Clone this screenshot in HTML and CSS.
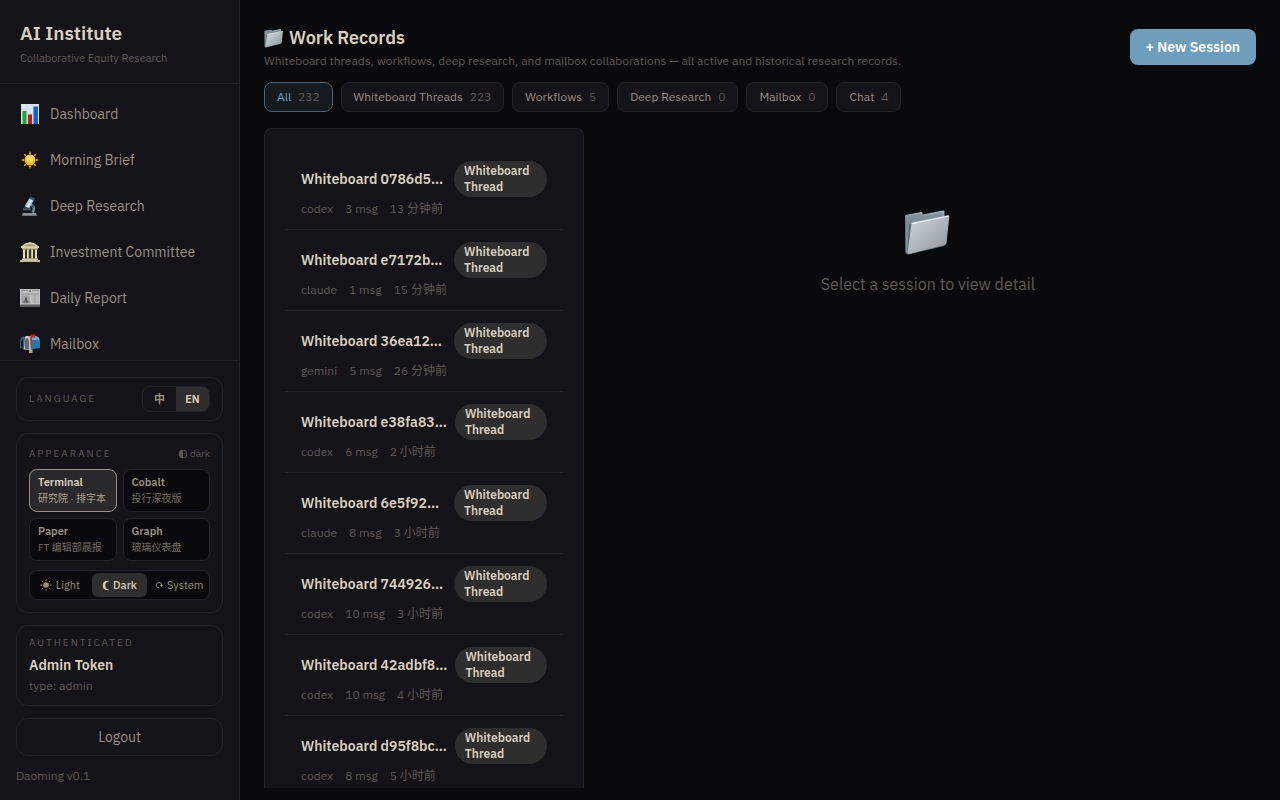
FILE: index.html
```html
<!DOCTYPE html>
<html lang="en">
<head>
    <meta charset="UTF-8">
    <meta name="viewport" content="width=device-width, initial-scale=1.0">
    <title>AI Institute - Work Records</title>
    <link rel="stylesheet" href="styles.css">
</head>
<body>
    <!-- shared folder icon -->
    <svg class="sprite" aria-hidden="true">
        <defs>
            <linearGradient id="folderFront" x1="0" y1="0" x2="1" y2="1">
                <stop offset="0" stop-color="#d3d9df"/>
                <stop offset="0.5" stop-color="#b0b6be"/>
                <stop offset="1" stop-color="#8d939b"/>
            </linearGradient>
            <linearGradient id="folderBack" x1="0" y1="0" x2="0" y2="1">
                <stop offset="0" stop-color="#a5b2bd"/>
                <stop offset="0.3" stop-color="#60717f"/>
                <stop offset="1" stop-color="#52616e"/>
            </linearGradient>
            <symbol id="folder" viewBox="0 0 48 48">
                <path d="M1 8.500Q1 7 2.500 6.800L17 4q1.500-.2 1.500 1v1.500L39 2.600q1.500-.2 1.500 1.200V38L4 46.500q-3-.5-3-3z" fill="url(#folderBack)"/>
                <path d="M2 9v35l1.500 1.500L5 16l33-7V5L18 9l-1-3z" fill="#7e8e9b"/>
                <path d="M7.500 16.200q0-1.500 1.500-1.900L43.500 7.200q2-.4 1.800 1.500L42.500 35q-.2 1.700-1.900 2.100L5 46q-1.700.3-1.500-1.500z" fill="url(#folderFront)"/>
                <path d="M7.600 15.800L44.800 8" stroke="#eef2f5" stroke-width="1" fill="none"/>
            </symbol>
        </defs>
    </svg>

    <div class="app">
        <aside class="sidebar">
            <div class="brand">
                <div class="brand-name">AI Institute</div>
                <div class="brand-sub">Collaborative Equity Research</div>
            </div>

            <nav class="nav">
                <a href="#" class="nav-item">
                    <svg class="nav-icon" viewBox="0 0 20 20">
                        <rect x="1" width="18" height="20" fill="#dce6f0"/>
                        <path d="M1 5h18M1 10h18M1 15h18M7 0v20M13 0v20" stroke="#bccbdd" stroke-width="0.500"/>
                        <rect x="2.500" y="7" width="4" height="13" fill="#0eb32a"/>
                        <rect x="8" y="10.500" width="4" height="9.500" fill="#c4141b"/>
                        <rect x="13.500" y="2.500" width="4.500" height="17.500" fill="#1260cc"/>
                    </svg>
                    Dashboard
                </a>
                <a href="#" class="nav-item">
                    <svg class="nav-icon" viewBox="0 0 20 20">
                        <path d="M10 1l1.200 3H8.800zM10 19l1.200-3H8.800zM1 10l3-1.200v2.400zM19 10l-3-1.200v2.400zM3.600 3.600l3 1.300-1.700 1.700zM16.400 3.600l-1.300 3-1.700-1.700zM3.600 16.400l1.300-3 1.700 1.700zM16.400 16.400l-3-1.300 1.700-1.700z" fill="#f4ad16"/>
                        <circle cx="10" cy="10" r="5.500" fill="#f7b81c"/>
                        <circle cx="10" cy="8.500" r="3.800" fill="#fdda55"/>
                    </svg>
                    Morning Brief
                </a>
                <a href="#" class="nav-item">
                    <svg class="nav-icon" viewBox="0 0 20 20">
                        <path d="M11 8.500q5 2.500 1.500 8" stroke="#6f8ca0" stroke-width="2.500" fill="none"/>
                        <path d="M3 17h13l1 2.800H2z" fill="#8298a7"/>
                        <path d="M3 12.500h8v1.700H3z" fill="#52697a"/>
                        <path d="M9.500 2l4.200 2.200-4.500 8.300-4.500-2.200z" fill="#a9c8de"/>
                        <path d="M10.500 3.500l1.500.8-4 7.200-1.500-.7z" fill="#dbeaf4"/>
                        <path d="M10.500.5l4.500 2-1 2-4.500-2z" fill="#3e5261"/>
                        <path d="M4.500 10.300l4 2-.8 1.600-3.700-1.800z" fill="#3b4e5c"/>
                        <circle cx="13" cy="10.500" r="1.800" fill="#405666"/>
                    </svg>
                    Deep Research
                </a>
                <a href="#" class="nav-item">
                    <svg class="nav-icon" viewBox="0 0 20 20">
                        <rect x="3" y="7" width="14" height="10" fill="#39331f"/>
                        <path d="M10 0Q15 .8 19 4.500V6H1V4.500Q5 .8 10 0z" fill="#d8cfaa"/>
                        <path d="M10 2Q14 2.500 16 4.200H4Q6 2.500 10 2z" fill="#a69c78"/>
                        <path d="M2 6h16v1.500H2z" fill="#b9af8b"/>
                        <path d="M3 7.500h2v9H3zM7 7.500h1.800v9H7zM11.200 7.500H13v9h-1.800zM15 7.500h2v9h-2z" fill="#e3dbba"/>
                        <path d="M2 16.500h16V18H2z" fill="#d6cda9"/>
                        <path d="M0 18h20v2H0z" fill="#c5bb94"/>
                    </svg>
                    Investment Committee
                </a>
                <a href="#" class="nav-item">
                    <svg class="nav-icon" viewBox="0 0 20 20">
                        <rect y="1" width="20" height="18" fill="#c0c0c0"/>
                        <path d="M0 16.500h20V19H0z" fill="#5c5c5c"/>
                        <path d="M1 2.500h7M12 2.500h7M1 6h18" stroke="#818181" stroke-width="0.800"/>
                        <path d="M8.500 3.500l1.500-1.500 1.500 1.500z" fill="#4d4d4d"/>
                        <rect x="1.500" y="7.500" width="8.500" height="8" fill="#a2a2a2"/>
                        <path d="M3 14.500q1-2 2-2V11q0-2 1-2t1 2v1.500q1.500 0 2 2z" fill="#575757"/>
                        <path d="M11.500 8h7M11.500 10h7M11.500 12h7M11.500 14h7M15 7v9" stroke="#a0a0a0" stroke-width="0.600"/>
                    </svg>
                    Daily Report
                </a>
                <a href="#" class="nav-item">
                    <svg class="nav-icon" viewBox="0 0 20 20">
                        <path d="M9 15h3.500v4H9z" fill="#c7a36c"/>
                        <path d="M5 2h10.500Q20 2.500 20 7.500V14L8 16z" fill="#2878a6"/>
                        <path d="M7 2h8.500Q19 2.500 19.500 6L9 6z" fill="#66aad0"/>
                        <path d="M3.500 15.500V7Q4 2 7 2t3.500 5v9z" fill="#c4c9ce"/>
                        <path d="M5 15V8q0-4 2-4t2 4v7.500z" fill="#5f6971"/>
                        <path d="M0 14V7.500Q.5 3 3.500 2.500L5 3.500 4 15z" fill="#38617d"/>
                        <path d="M1 13V8q.5-3 2-3v9z" fill="#171f28"/>
                        <path d="M10.500.5H15v3h-3v8h-1.500z" fill="#e01f14"/>
                    </svg>
                    Mailbox
                </a>
            </nav>

            <div class="sidebar-footer">
                <div class="card language">
                    <span class="card-label">LANGUAGE</span>
                    <div class="lang-switch">
                        <button type="button">中</button>
                        <button type="button" class="active">EN</button>
                    </div>
                </div>

                <div class="card">
                    <div class="card-head">
                        <span class="card-label">APPEARANCE</span>
                        <span class="mode-note">
                            <svg class="mode-icon" viewBox="0 0 10 10"><circle cx="5" cy="5" r="4" fill="none" stroke="currentColor" stroke-width="0.800"/><path d="M5 1a4 4 0 0 0 0 8z" fill="currentColor"/></svg>
                            dark
                        </span>
                    </div>
                    <div class="theme-grid">
                        <button type="button" class="theme active"><strong>Terminal</strong><span>研究院 · 排字本</span></button>
                        <button type="button" class="theme"><strong>Cobalt</strong><span>投行深夜版</span></button>
                        <button type="button" class="theme"><strong>Paper</strong><span>FT 编辑部晨报</span></button>
                        <button type="button" class="theme"><strong>Graph</strong><span>玻璃仪表盘</span></button>
                    </div>
                    <div class="mode-switch">
                        <button type="button">
                            <svg class="mode-sun" viewBox="0 0 12 12"><circle cx="6" cy="6" r="2.800" fill="currentColor"/><path d="M6 0v2M6 10v2M0 6h2M10 6h2M1.800 1.800l1.400 1.400M8.800 8.800l1.400 1.400M10.200 1.800L8.800 3.200M3.200 8.800l-1.400 1.400" stroke="currentColor" stroke-width="0.800"/></svg>
                            Light
                        </button>
                        <button type="button" class="active">
                            <svg class="mode-moon" viewBox="0 0 7 11"><path d="M6.500 1.200Q3 1.800 3 5.500T6.500 9.800Q1 10.500 1 5.500T6.500 1.200z" fill="currentColor" stroke="currentColor" stroke-width="0.500"/></svg>
                            Dark
                        </button>
                        <button type="button">
                            <svg class="mode-sync" viewBox="0 0 8 8"><path d="M4.500 6.800A2.700 2.700 0 1 1 6.700 4.500" fill="none" stroke="currentColor" stroke-width="0.900"/><path d="M4.800 4h3.200L6.500 6z" fill="currentColor"/></svg>
                            System
                        </button>
                    </div>
                </div>

                <div class="card account">
                    <div class="card-label">AUTHENTICATED</div>
                    <div class="account-name">Admin Token</div>
                    <div class="account-type">type: admin</div>
                </div>

                <button type="button" class="logout">Logout</button>
                <div class="version">Daoming v0.1</div>
            </div>
        </aside>

        <main class="main">
            <header class="page-head">
                <div>
                    <h1><svg class="title-icon"><use href="#folder"/></svg>Work Records</h1>
                    <p>Whiteboard threads, workflows, deep research, and mailbox collaborations — all active and historical research records.</p>
                </div>
                <button type="button" class="new-session">+ New Session</button>
            </header>

            <div class="filters">
                <button type="button" class="filter active">All <span>232</span></button>
                <button type="button" class="filter">Whiteboard Threads <span>223</span></button>
                <button type="button" class="filter">Workflows <span>5</span></button>
                <button type="button" class="filter">Deep Research <span>0</span></button>
                <button type="button" class="filter">Mailbox <span>0</span></button>
                <button type="button" class="filter">Chat <span>4</span></button>
            </div>

            <div class="content">
                <section class="session-list">
                    <article class="session">
                        <div class="session-top"><h2>Whiteboard 0786d5…</h2><span class="badge">Whiteboard Thread</span></div>
                        <div class="session-meta"><span>codex</span><span>3 msg</span><span>13 分钟前</span></div>
                    </article>
                    <article class="session">
                        <div class="session-top"><h2>Whiteboard e7172b…</h2><span class="badge">Whiteboard Thread</span></div>
                        <div class="session-meta"><span>claude</span><span>1 msg</span><span>15 分钟前</span></div>
                    </article>
                    <article class="session">
                        <div class="session-top"><h2>Whiteboard 36ea12…</h2><span class="badge">Whiteboard Thread</span></div>
                        <div class="session-meta"><span>gemini</span><span>5 msg</span><span>26 分钟前</span></div>
                    </article>
                    <article class="session">
                        <div class="session-top"><h2>Whiteboard e38fa83…</h2><span class="badge">Whiteboard Thread</span></div>
                        <div class="session-meta"><span>codex</span><span>6 msg</span><span>2 小时前</span></div>
                    </article>
                    <article class="session">
                        <div class="session-top"><h2>Whiteboard 6e5f92…</h2><span class="badge">Whiteboard Thread</span></div>
                        <div class="session-meta"><span>claude</span><span>8 msg</span><span>3 小时前</span></div>
                    </article>
                    <article class="session">
                        <div class="session-top"><h2>Whiteboard 744926…</h2><span class="badge">Whiteboard Thread</span></div>
                        <div class="session-meta"><span>codex</span><span>10 msg</span><span>3 小时前</span></div>
                    </article>
                    <article class="session">
                        <div class="session-top"><h2>Whiteboard 42adbf8…</h2><span class="badge">Whiteboard Thread</span></div>
                        <div class="session-meta"><span>codex</span><span>10 msg</span><span>4 小时前</span></div>
                    </article>
                    <article class="session">
                        <div class="session-top"><h2>Whiteboard d95f8bc…</h2><span class="badge">Whiteboard Thread</span></div>
                        <div class="session-meta"><span>codex</span><span>8 msg</span><span>5 小时前</span></div>
                    </article>
                </section>

                <section class="detail-empty">
                    <svg class="empty-icon"><use href="#folder"/></svg>
                    <p>Select a session to view detail</p>
                </section>
            </div>
        </main>
    </div>
</body>
</html>
```
FILE: styles.css
```css
:root {
    --bg: #0a0a0c;
    --panel: #141318;
    --line: #24232b;
    --text: #d9cfbf;
    --text-mid: #989082;
    --text-dim: #5e5a52;
    --active: #2e2e2e;
    --accent: #6f9dbc;
}
* {
    box-sizing: border-box;
}
body {
    margin: 0;
    background: var(--bg);
    color: var(--text);
    font-family: "IBM Plex Sans", Roboto, "Noto Sans CJK SC", sans-serif;
    font-size: 14px;
    line-height: 20px;
}
button {
    font: inherit;
    color: inherit;
    background: none;
    border: none;
    padding: 0;
    cursor: pointer;
}
h1, h2, p {
    margin: 0;
}
svg {
    flex-shrink: 0;
}
.sprite {
    display: block;
    width: 0;
    height: 0;
}
.app {
    display: flex;
    height: 100vh;
    overflow: hidden;
}

/* sidebar */
.sidebar {
    width: 240px;
    flex-shrink: 0;
    display: flex;
    flex-direction: column;
    background: var(--panel);
    border-right: 1px solid var(--line);
}
.brand {
    padding: 20px 20px 16px;
    border-bottom: 1px solid var(--line);
}
.brand-name {
    font-size: 19px;
    font-weight: 600;
    line-height: 27px;
}
.brand-sub {
    margin-top: 2px;
    font-size: 11px;
    line-height: 18px;
    color: var(--text-dim);
}
.nav {
    flex: 1;
    min-height: 0;
    overflow: hidden;
    padding: 7px 0;
}
.nav-item {
    display: flex;
    align-items: center;
    gap: 10px;
    height: 46px;
    padding: 0 20px;
    color: var(--text-mid);
    font-size: 14px;
    text-decoration: none;
}
.nav-icon {
    width: 20px;
    height: 20px;
}
.sidebar-footer {
    display: flex;
    flex-direction: column;
    gap: 12px;
    padding: 16px;
    border-top: 1px solid var(--line);
}
.card {
    padding: 12px;
    border: 1px solid var(--line);
    border-radius: 12px;
}
.card-label {
    font-size: 10px;
    line-height: 14px;
    letter-spacing: 2px;
    color: var(--text-dim);
}
.language {
    display: flex;
    align-items: center;
    justify-content: space-between;
    padding: 8px 12px;
}
.lang-switch {
    display: flex;
    border: 1px solid var(--line);
    border-radius: 8px;
    overflow: hidden;
}
.lang-switch button {
    width: 33px;
    height: 24px;
    font-size: 11px;
    font-weight: 600;
    line-height: 24px;
    color: var(--text-mid);
}
.lang-switch .active {
    background: var(--active);
    color: var(--text);
}
.card-head {
    display: flex;
    align-items: center;
    justify-content: space-between;
    margin-bottom: 8px;
    line-height: 15px;
}
.mode-note {
    display: flex;
    align-items: center;
    gap: 2px;
    font-size: 10px;
    color: var(--text-dim);
}
.mode-icon {
    width: 10px;
    height: 10px;
}
.theme-grid {
    display: grid;
    grid-template-columns: 1fr 1fr;
    gap: 6px;
}
.theme {
    display: flex;
    flex-direction: column;
    padding: 4px 8px;
    border: 1px solid var(--line);
    border-radius: 8px;
    background: var(--bg);
    color: var(--text-mid);
    text-align: left;
}
.theme strong {
    font-size: 11px;
    font-weight: 600;
    line-height: 17px;
}
.theme span {
    font-size: 10px;
    line-height: 16px;
    color: #746e64;
    white-space: nowrap;
}
.theme.active {
    background: #29282a;
    border-color: var(--text-mid);
    color: var(--text);
}
.theme.active span {
    color: #aaa294;
}
.mode-switch {
    display: grid;
    grid-template-columns: 1fr 1fr 1fr;
    gap: 4px;
    margin-top: 9px;
    padding: 2px;
    border: 1px solid var(--line);
    border-radius: 8px;
    background: var(--bg);
}
.mode-switch button {
    display: flex;
    align-items: center;
    justify-content: center;
    gap: 4px;
    height: 24px;
    border-radius: 6px;
    font-size: 11px;
    color: var(--text-mid);
}
.mode-switch .active {
    background: var(--active);
    color: var(--text);
    font-weight: 500;
}
.mode-sun {
    width: 12px;
    height: 12px;
}
.mode-moon {
    width: 7px;
    height: 11px;
}
.mode-sync {
    width: 8px;
    height: 8px;
}
.account {
    padding: 10px 12px;
}
.account-name {
    margin-top: 4px;
    font-weight: 600;
    line-height: 22px;
}
.account-type {
    margin-top: 1px;
    font-size: 12px;
    line-height: 18px;
    color: var(--text-dim);
}
.logout {
    height: 38px;
    border: 1px solid var(--line);
    border-radius: 12px;
    color: var(--text-mid);
}
.version {
    font-size: 12px;
    line-height: 16px;
    color: var(--text-dim);
}

/* main */
.main {
    flex: 1;
    min-width: 0;
    display: flex;
    flex-direction: column;
    padding: 24px 24px 12px;
}
.page-head {
    display: flex;
    align-items: center;
    justify-content: space-between;
    margin-bottom: 12px;
}
.page-head h1 {
    display: flex;
    align-items: center;
    gap: 5px;
    font-size: 18px;
    font-weight: 600;
    line-height: 27px;
}
.title-icon {
    width: 20px;
    height: 20px;
}
.page-head p {
    font-size: 12px;
    line-height: 19px;
    color: var(--text-dim);
}
.new-session {
    height: 36px;
    padding: 0 16px;
    border-radius: 8px;
    background: var(--accent);
    color: #fff;
    font-weight: 600;
    white-space: nowrap;
}
.filters {
    display: flex;
    gap: 8px;
    margin-bottom: 16px;
}
.filter {
    height: 30px;
    padding: 0 12px;
    border: 1px solid var(--line);
    border-radius: 8px;
    background: var(--panel);
    color: var(--text-mid);
    font-size: 12px;
}
.filter span {
    margin-left: 4px;
    color: var(--text-dim);
}
.filter.active {
    background: #141a1e;
    border-color: #456276;
    color: var(--accent);
}
.content {
    flex: 1;
    min-height: 0;
    display: grid;
    grid-template-columns: 320px 1fr;
    gap: 16px;
}
.session-list {
    min-height: 0;
    overflow: hidden;
    padding: 20px;
    border: 1px solid var(--line);
    border-bottom: none;
    border-radius: 8px 8px 0 0;
    background: var(--panel);
}
.session {
    padding: 12px 16px;
    border-bottom: 1px solid var(--line);
}
.session-top {
    display: flex;
    align-items: center;
    justify-content: space-between;
    gap: 8px;
}
.session h2 {
    font-size: 14px;
    font-weight: 600;
    line-height: 20px;
    white-space: nowrap;
}
.badge {
    width: 93px;
    padding: 2px 10px;
    border-radius: 18px;
    background: var(--active);
    font-size: 12px;
    font-weight: 600;
    line-height: 16px;
}
.session-meta {
    display: flex;
    gap: 12px;
    margin-top: 4px;
    font-size: 12px;
    line-height: 16px;
    color: var(--text-dim);
}
.detail-empty {
    display: flex;
    flex-direction: column;
    align-items: center;
    padding-top: 80px;
    color: var(--text-dim);
    font-size: 16px;
    line-height: 24px;
}
.empty-icon {
    width: 48px;
    height: 48px;
    margin-bottom: 16px;
}
```
